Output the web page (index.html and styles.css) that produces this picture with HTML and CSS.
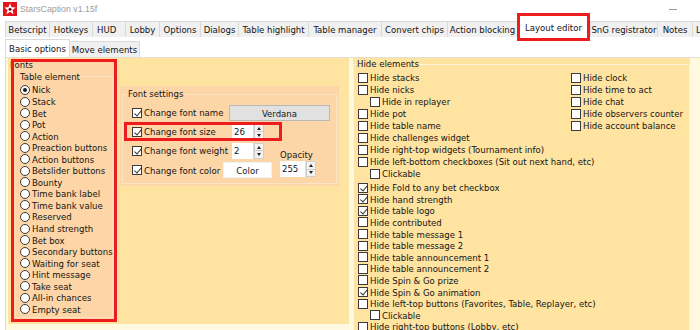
FILE: index.html
```html
<!DOCTYPE html>
<html>
<head>
<meta charset="utf-8">
<title>StarsCaption v1.15f</title>
<link rel="stylesheet" href="styles.css">
</head>
<body>
<div class="titlebar">
  <svg class="app-icon" viewBox="0 0 14 14"><rect width="14" height="14" fill="#e3141b"/><polygon points="7,1.3 8.6,5.2 12.7,5.4 9.5,8 10.6,12.2 7,9.8 3.4,12.2 4.5,8 1.3,5.4 5.4,5.2" fill="#fff"/><circle cx="7" cy="7.3" r="1.5" fill="#7a0a0a"/></svg>
  <span class="title">StarsCaption v1.15f</span>
  <span class="minimize"></span>
</div>
<div class="tabs">
  <span class="tab">Betscript</span>
  <span class="tab">Hotkeys</span>
  <span class="tab">HUD</span>
  <span class="tab">Lobby</span>
  <span class="tab">Options</span>
  <span class="tab">Dialogs</span>
  <span class="tab">Table highlight</span>
  <span class="tab">Table manager</span>
  <span class="tab">Convert chips</span>
  <span class="tab">Action blocking</span>
  <span class="tab active">Layout editor</span>
  <span class="tab">SnG registrator</span>
  <span class="tab">Notes</span>
  <span class="tab">Log</span>
</div>
<div class="subtabs">
  <span class="subtab active">Basic options</span>
  <span class="subtab">Move elements</span>
</div>
<div class="page">
  <div class="fonts-panel">
    <div class="te-col">
      <div class="fonts-legend">Fonts</div>
      <fieldset class="te-box">
        <legend>Table element</legend>
        <div class="radios">
          <div class="opt"><span class="rb on"></span>Nick</div>
          <div class="opt"><span class="rb"></span>Stack</div>
          <div class="opt"><span class="rb"></span>Bet</div>
          <div class="opt"><span class="rb"></span>Pot</div>
          <div class="opt"><span class="rb"></span>Action</div>
          <div class="opt"><span class="rb"></span>Preaction buttons</div>
          <div class="opt"><span class="rb"></span>Action buttons</div>
          <div class="opt"><span class="rb"></span>Betslider buttons</div>
          <div class="opt"><span class="rb"></span>Bounty</div>
          <div class="opt"><span class="rb"></span>Time bank label</div>
          <div class="opt"><span class="rb"></span>Time bank value</div>
          <div class="opt"><span class="rb"></span>Reserved</div>
          <div class="opt"><span class="rb"></span>Hand strength</div>
          <div class="opt"><span class="rb"></span>Bet box</div>
          <div class="opt"><span class="rb"></span>Secondary buttons</div>
          <div class="opt"><span class="rb"></span>Waiting for seat</div>
          <div class="opt"><span class="rb"></span>Hint message</div>
          <div class="opt"><span class="rb"></span>Take seat</div>
          <div class="opt"><span class="rb"></span>All-in chances</div>
          <div class="opt"><span class="rb"></span>Empty seat</div>
        </div>
      </fieldset>
    </div>
    <div class="fs-panel">
      <fieldset class="fs-box">
        <legend>Font settings</legend>
        <div class="fs-row">
          <span class="fs-label"><span class="cb on"></span>Change font name</span>
          <span class="btn font-btn">Verdana</span>
        </div>
        <div class="fs-row hl">
          <span class="fs-label"><span class="cb on"></span>Change font size</span>
          <span class="spin"><span class="spin-val">26</span><span class="spin-btns"><i class="up"></i><i class="down"></i></span></span>
        </div>
        <div class="fs-row">
          <span class="fs-label"><span class="cb on"></span>Change font weight</span>
          <span class="spin"><span class="spin-val">2</span><span class="spin-btns"><i class="up"></i><i class="down"></i></span></span>
        </div>
        <div class="fs-row">
          <span class="fs-label"><span class="cb on"></span>Change font color</span>
          <span class="btn color-btn">Color</span>
          <span class="opacity">
            <span class="opacity-label">Opacity</span>
            <span class="spin wide"><span class="spin-val">255</span><span class="spin-btns"><i class="up"></i><i class="down"></i></span></span>
          </span>
        </div>
      </fieldset>
    </div>
  </div>
  <div class="hide-panel">
    <fieldset class="hide-box">
      <legend>Hide elements</legend>
      <div class="hide-top">
        <div class="hide-col first">
          <div class="chk"><span class="cb"></span>Hide stacks</div>
          <div class="chk"><span class="cb"></span>Hide nicks</div>
          <div class="chk ind"><span class="cb"></span>Hide in replayer</div>
          <div class="chk"><span class="cb"></span>Hide pot</div>
          <div class="chk"><span class="cb"></span>Hide table name</div>
          <div class="chk"><span class="cb"></span>Hide challenges widget</div>
          <div class="chk"><span class="cb"></span>Hide right-top widgets (Tournament info)</div>
          <div class="chk"><span class="cb"></span>Hide left-bottom checkboxes (Sit out next hand, etc)</div>
          <div class="chk ind"><span class="cb"></span>Clickable</div>
        </div>
        <div class="hide-col">
          <div class="chk"><span class="cb"></span>Hide clock</div>
          <div class="chk"><span class="cb"></span>Hide time to act</div>
          <div class="chk"><span class="cb"></span>Hide chat</div>
          <div class="chk"><span class="cb"></span>Hide observers counter</div>
          <div class="chk"><span class="cb"></span>Hide account balance</div>
        </div>
      </div>
      <div class="hide-bottom">
        <div class="chk"><span class="cb on"></span>Hide Fold to any bet checkbox</div>
        <div class="chk"><span class="cb on"></span>Hide hand strength</div>
        <div class="chk"><span class="cb on"></span>Hide table logo</div>
        <div class="chk"><span class="cb"></span>Hide contributed</div>
        <div class="chk"><span class="cb"></span>Hide table message 1</div>
        <div class="chk"><span class="cb"></span>Hide table message 2</div>
        <div class="chk"><span class="cb"></span>Hide table announcement 1</div>
        <div class="chk"><span class="cb"></span>Hide table announcement 2</div>
        <div class="chk"><span class="cb"></span>Hide Spin &amp; Go prize</div>
        <div class="chk"><span class="cb on"></span>Hide Spin &amp; Go animation</div>
        <div class="chk"><span class="cb"></span>Hide left-top buttons (Favorites, Table, Replayer, etc)</div>
        <div class="chk ind"><span class="cb"></span>Clickable</div>
        <div class="chk"><span class="cb"></span>Hide right-top buttons (Lobby, etc)</div>
      </div>
    </fieldset>
  </div>
</div>
</body>
</html>
```

FILE: styles.css
```css
* { box-sizing: border-box; }
html, body { margin: 0; padding: 0; }
body {
  width: 700px;
  height: 330px;
  overflow: hidden;
  background: #ffffff;
  font-family: "DejaVu Sans Condensed", "Liberation Sans", sans-serif;
  font-size: 9.5px;
  color: #151515;
}

/* title bar */
.titlebar { height: 21px; display: flex; align-items: center; padding-left: 3px; }
.app-icon { width: 14px; height: 14px; margin-top: -4px; flex: none; }
.title { margin-left: 3px; margin-top: -3px; font-family: "Liberation Sans", sans-serif; font-size: 8.8px; color: #9c9c9c; }
.minimize { margin-left: auto; margin-right: 23px; margin-top: -3px; width: 8px; height: 1px; background: #9a9a9a; }

/* main tabs */
.tabs { display: flex; height: 17px; padding-left: 5px; align-items: flex-start; white-space: nowrap; }
.tab {
  flex: none;
  height: 16px;
  line-height: 16px;
  text-align: center;
  background: #f0f0f0;
  border-top: 1px solid #dadada;
  border-left: 1px solid #dadada;
  overflow: hidden;
}
.tab:nth-child(1) { width: 44px; }
.tab:nth-child(2) { width: 43px; }
.tab:nth-child(3) { width: 33px; text-align: left; padding-left: 4px; }
.tab:nth-child(4) { width: 34px; }
.tab:nth-child(5) { width: 41px; }
.tab:nth-child(6) { width: 38px; }
.tab:nth-child(7) { width: 70px; }
.tab:nth-child(8) { width: 73px; }
.tab:nth-child(9) { width: 66px; }
.tab:nth-child(10) { width: 70px; }
.tab:nth-child(12) { width: 67px; }
.tab:nth-child(13) { width: 35px; }
.tab:nth-child(14) { width: 40px; text-align: left; padding-left: 3px; }
.tab.active {
  position: relative;
  z-index: 2;
  width: 73px;
  height: 28px;
  margin-top: -8px;
  margin-bottom: -4px;
  padding-top: 7px;
  background: #ffffff;
  border: none;
  outline: 3px solid #ee1c1c;
  outline-offset: -3px;
}

/* sub tabs */
.subtabs { display: flex; height: 19px; padding-left: 5px; align-items: flex-end; }
.subtab {
  flex: none;
  width: 70px;
  height: 16px;
  line-height: 15px;
  text-align: center;
  background: #f0f0f0;
  border-top: 1px solid #dadada;
  border-right: 1px solid #dadada;
}
.subtab.active {
  width: 65px;
  height: 18px;
  line-height: 17px;
  background: #ffffff;
  border-left: 1px solid #dadada;
  border-right: 1px solid #dadada;
}

/* page */
.page {
  display: flex;
  align-items: flex-start;
  height: 273px;
  margin-left: 5px;
  padding-left: 2px;
  overflow: hidden;
  background: #fffadf;
  border-top: 1px solid #e3e0d2;
  border-left: 1px solid #dcdcdc;
}

fieldset { margin: 0; padding: 0; border: 1px solid #fff2d3; min-width: 0; }
legend { padding: 0 1px; margin: 0; line-height: 12px; }

/* fonts */
.fonts-panel {
  flex: none;
  display: flex;
  align-items: flex-start;
  width: 341px;
  height: 266px;
  background: #ffe3a1;
}
.te-col {
  flex: none;
  display: flex;
  flex-direction: column;
  width: 100px;
  height: 257px;
  margin: 4px 0 0 6px;
  background: #fdd5a6;
  outline: 3px solid #ee1c1c;
}
.fonts-legend { height: 10px; line-height: 10px; margin: -2px 0 0 -4px; }
.te-box {
  margin: 1px 1px 0 1px;
  padding-left: 3px;
  height: 247px;
  border-color: #fde0bd;
}
.te-box legend { line-height: 11px; }
.radios { margin-top: 2.2px; }
.opt { display: flex; align-items: center; height: 11.55px; white-space: nowrap; }
.rb {
  flex: none;
  position: relative;
  width: 10px;
  height: 10px;
  margin: 0 2px 0 1px;
  border: 1px solid #3a3a3a;
  border-radius: 50%;
  background: #ffffff;
}
.rb.on::after {
  content: "";
  position: absolute;
  left: 2px;
  top: 2px;
  width: 4px;
  height: 4px;
  border-radius: 50%;
  background: #1a1a1a;
}

.cb {
  flex: none;
  position: relative;
  display: inline-block;
  width: 10px;
  height: 10px;
  margin-right: 2px;
  border: 1px solid #3a3a3a;
  background: #ffffff;
}
.cb.on::after {
  content: "";
  position: absolute;
  left: 2.6px;
  top: 0.2px;
  width: 2.6px;
  height: 5.6px;
  border-right: 1.1px solid #333;
  border-bottom: 1.1px solid #333;
  transform: rotate(40deg);
}

.fs-panel {
  flex: none;
  width: 219px;
  height: 100px;
  margin: 28px 0 0 6px;
  padding: 2px 2px 0;
  background: #fdd6a8;
}
.fs-box { height: 96px; padding-left: 4px; border-color: #fbe3c4; }
.fs-row {
  display: flex;
  align-items: center;
  height: 19.2px;
  margin-left: -3px;
  padding-left: 8px;
  white-space: nowrap;
}
.fs-row:first-of-type { margin-top: 3px; }
.fs-row.hl { width: 158px; outline: 3px solid #ee1c1c; outline-offset: -3px; }
.fs-label { display: flex; align-items: center; width: 97px; flex: none; }
.btn { display: block; flex: none; height: 16px; line-height: 15px; text-align: center; }
.font-btn { width: 101px; background: #e1e1e1; border: 1px solid #b9b9b9; }
.color-btn { width: 49px; margin-left: -6px; background: #ffffff; border: 1px solid #f1f1f1; }
.spin { display: flex; flex: none; height: 16px; margin-left: 3px; }
.spin-val { width: 21px; height: 16px; line-height: 16px; padding-left: 2px; background: #ffffff; }
.spin.wide .spin-val { width: 25px; }
.spin-btns {
  display: flex;
  flex-direction: column;
  width: 10px;
  height: 16px;
  margin-left: 1px;
  background: #f3f3f3;
  border: 1px solid #cfcfcf;
}
.spin-btns i { flex: 1; display: flex; align-items: center; justify-content: center; }
.spin-btns i + i { border-top: 1px solid #cfcfcf; }
.spin-btns .up::before {
  content: "";
  border-left: 2.5px solid transparent;
  border-right: 2.5px solid transparent;
  border-bottom: 3px solid #222;
}
.spin-btns .down::before {
  content: "";
  border-left: 2.5px solid transparent;
  border-right: 2.5px solid transparent;
  border-top: 3px solid #222;
}
.opacity { display: flex; flex-direction: column; margin: -14px 0 0 8px; }
.opacity-label { height: 12px; line-height: 12px; }
.opacity .spin { margin-left: 0; }

/* hide elements */
.hide-panel {
  flex: none;
  width: 337px;
  height: 272px;
  margin-left: 4px;
  overflow: hidden;
  background: #ffe3a1;
}
.hide-box { height: 272px; padding-left: 2px; border-color: #fff4da; border-bottom: none; }
.hide-top { display: flex; margin-top: 1.7px; }
.hide-col.first { width: 213px; flex: none; }
.chk { display: flex; align-items: center; height: 12px; padding-left: 2px; white-space: nowrap; }
.chk.ind { padding-left: 14px; }
.hide-bottom { margin-top: 2.2px; }
.hide-bottom .chk { height: 11.6px; }
```
